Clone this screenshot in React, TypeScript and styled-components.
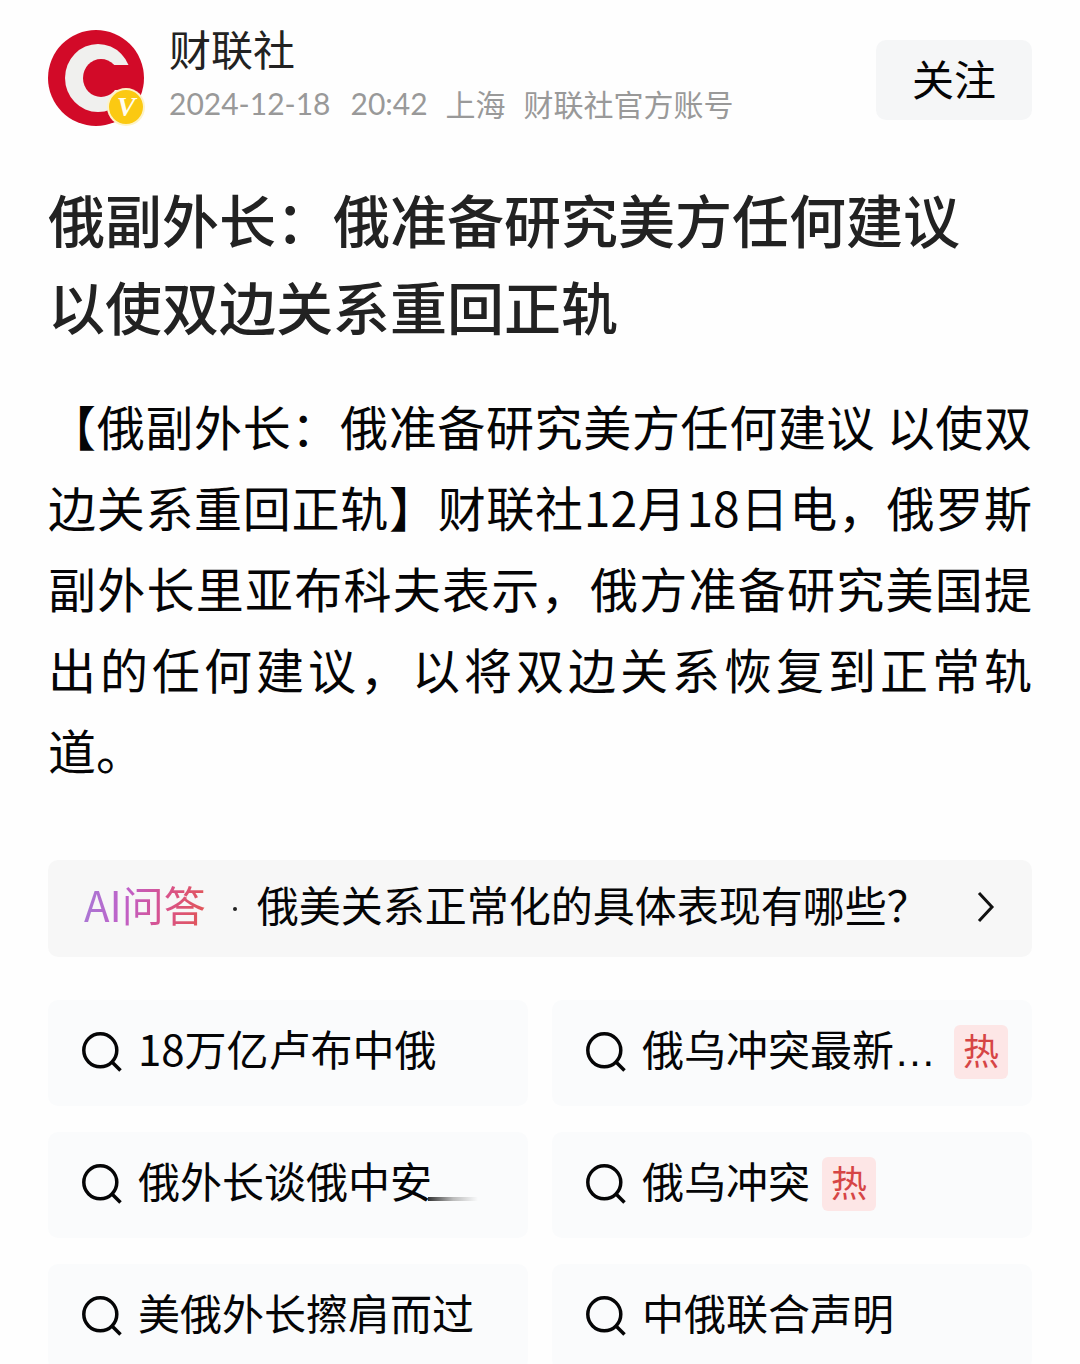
import React from "react";
import styled, { createGlobalStyle } from "styled-components";

const GlobalStyle = createGlobalStyle`
  *, *::before, *::after { box-sizing: border-box; }
  body {
    margin: 0;
    background: #fefefe;
    color: #050506;
    font-family: "Noto Sans CJK SC", "Noto Sans", sans-serif;
  }
`;

const Page = styled.main`
  padding: 21px 48px 0;
`;

const Header = styled.header`
  display: flex;
  align-items: center;
  gap: 24px;
`;

const AvatarMark = styled.svg`
  flex: none;
  width: 97px;
  height: 97px;
`;

const Author = styled.div`
  flex: 1;
  min-width: 0;
  padding-bottom: 4px;
`;

const AuthorName = styled.a`
  display: block;
  color: #222;
  font-size: 42px;
  line-height: 54px;
  text-decoration: none;
`;

const Meta = styled.div`
  display: flex;
  gap: 18px;
  color: #999;
  font-size: 30px;
  line-height: 56px;
  white-space: nowrap;
`;

const Stamp = styled.time`
  display: flex;
  gap: 20px;
  font-family: Lato, "Noto Sans CJK SC", sans-serif;
`;

const FollowButton = styled.button`
  width: 156px;
  height: 80px;
  margin-top: 4px;
  padding: 0 0 6px;
  border: 0;
  border-radius: 10px;
  background: #f5f6f7;
  color: #050506;
  font-family: inherit;
  font-size: 42px;
`;

const Title = styled.h1`
  margin: 40px 0 36px;
  color: #222;
  font-size: 57px;
  font-weight: 500;
  line-height: 87px;
`;

const Body = styled.p`
  margin: 0 0 70px;
  font-size: 48px;
  line-height: 81px;
  text-align: justify;
`;

const AskLink = styled.a`
  display: flex;
  align-items: center;
  height: 97px;
  margin-bottom: 43px;
  padding: 0 36px;
  border-radius: 10px;
  background: #f7f7f7;
  color: inherit;
  font-size: 42px;
  text-decoration: none;
  white-space: nowrap;
`;

const AskLabel = styled.span`
  padding-bottom: 10px;
  background: linear-gradient(100deg, #a77bd6 0%, #c060c8 35%, #d9528a 65%, #e2574f 100%);
  background-clip: text;
  -webkit-background-clip: text;
  color: transparent;
`;

const Dot = styled.span`
  width: 4px;
  height: 4px;
  margin: 0 20px 0 27px;
  border-radius: 50%;
  background: #222;
`;

const AskText = styled.span`
  flex: 1;
  padding-bottom: 10px;
`;

const Chevron = styled.svg`
  width: 20px;
  height: 32px;
  margin-bottom: 4px;
  fill: none;
  stroke: #111;
  stroke-width: 3;
`;

const Topics = styled.nav`
  display: grid;
  grid-template-columns: 1fr 1fr;
  gap: 26px 24px;
`;

const Topic = styled.a`
  display: flex;
  align-items: center;
  height: 106px;
  padding: 0 24px 2px 33px;
  border-radius: 10px;
  background: #fafbfc;
  color: inherit;
  font-size: 42px;
  text-decoration: none;
  white-space: nowrap;
`;

const SearchIcon = styled.svg`
  flex: none;
  width: 42px;
  height: 42px;
  margin-right: 15px;
  fill: none;
  stroke: #050506;
  stroke-width: 3.5;
`;

const TopicText = styled.span<{ $fade?: boolean }>`
  position: relative;
  padding-bottom: 9px;
  ${(p) =>
    p.$fade &&
    `&::after {
      content: "";
      position: absolute;
      left: 100%;
      bottom: 18px;
      width: 50px;
      height: 4px;
      margin-left: -4px;
      background: linear-gradient(90deg, #333, #bbb 50%, transparent);
    }`}
`;

const Ellipsis = styled.span`
  font-family: "Liberation Sans", sans-serif;
`;

const HotTag = styled.span<{ $end?: boolean }>`
  width: 54px;
  height: 54px;
  margin-left: ${(p) => (p.$end ? "auto" : "12px")};
  border-radius: 6px;
  background: #fde6e6;
  color: #d64545;
  font-size: 36px;
  line-height: 48px;
  text-align: center;
`;

type TopicItem = {
  text: string;
  clipped?: boolean;
  fade?: boolean;
  hot?: boolean;
};

const topics: TopicItem[] = [
  { text: "18万亿卢布中俄" },
  { text: "俄乌冲突最新", clipped: true, hot: true },
  { text: "俄外长谈俄中安", fade: true },
  { text: "俄乌冲突", hot: true },
  { text: "美俄外长擦肩而过" },
  { text: "中俄联合声明" },
];

function Avatar() {
  return (
    <AvatarMark viewBox="0 0 97 97" role="img" aria-label="财联社">
      <circle cx="48" cy="48" r="48" fill="#d20a28" />
      <ellipse cx="50" cy="48" rx="33" ry="34" fill="#f0f0ee" />
      <ellipse cx="53" cy="48" rx="18" ry="19" fill="#d20a28" />
      <path d="M62 35H90V60H62Z" fill="#d20a28" />
      <circle cx="78" cy="77" r="19" fill="#fdf3c8" />
      <circle cx="78" cy="77" r="17" fill="#fbc912" />
      <text
        x="78"
        y="86"
        fill="#fffdf0"
        fontFamily="Liberation Serif, serif"
        fontSize="28"
        fontWeight="700"
        fontStyle="italic"
        textAnchor="middle"
      >
        V
      </text>
    </AvatarMark>
  );
}

export default function App() {
  return (
    <>
      <GlobalStyle />
      <Page>
        <Header>
          <Avatar />
          <Author>
            <AuthorName href="#author">财联社</AuthorName>
            <Meta>
              <Stamp dateTime="2024-12-18T20:42">
                <span>2024-12-18</span>
                <span>20:42</span>
              </Stamp>
              <span>上海</span>
              <span>财联社官方账号</span>
            </Meta>
          </Author>
          <FollowButton type="button">关注</FollowButton>
        </Header>

        <article>
          <Title>
            俄副外长：俄准备研究美方任何建议
            <br />
            以使双边关系重回正轨
          </Title>
          <Body>
            【俄副外长：俄准备研究美方任何建议 以使双边关系重回正轨】财联社12月18日电，俄罗斯副外长里亚布科夫表示，俄方准备研究美国提出的任何建议，以将双边关系恢复到正常轨道。
          </Body>
        </article>

        <AskLink href="#ask">
          <AskLabel>AI问答</AskLabel>
          <Dot />
          <AskText>俄美关系正常化的具体表现有哪些？</AskText>
          <Chevron viewBox="0 0 20 32" aria-hidden="true">
            <path d="M3 2L16 16L3 30" />
          </Chevron>
        </AskLink>

        <Topics>
          {topics.map((t) => (
            <Topic href="#topic" key={t.text}>
              <SearchIcon viewBox="0 0 42 42" aria-hidden="true">
                <circle cx="19.3" cy="19.3" r="16.5" />
                <path d="M30.5 30.5L39.5 39.5" />
              </SearchIcon>
              <TopicText $fade={t.fade}>
                {t.text}
                {t.clipped && <Ellipsis>…</Ellipsis>}
              </TopicText>
              {t.hot && <HotTag $end={t.clipped}>热</HotTag>}
            </Topic>
          ))}
        </Topics>
      </Page>
    </>
  );
}
